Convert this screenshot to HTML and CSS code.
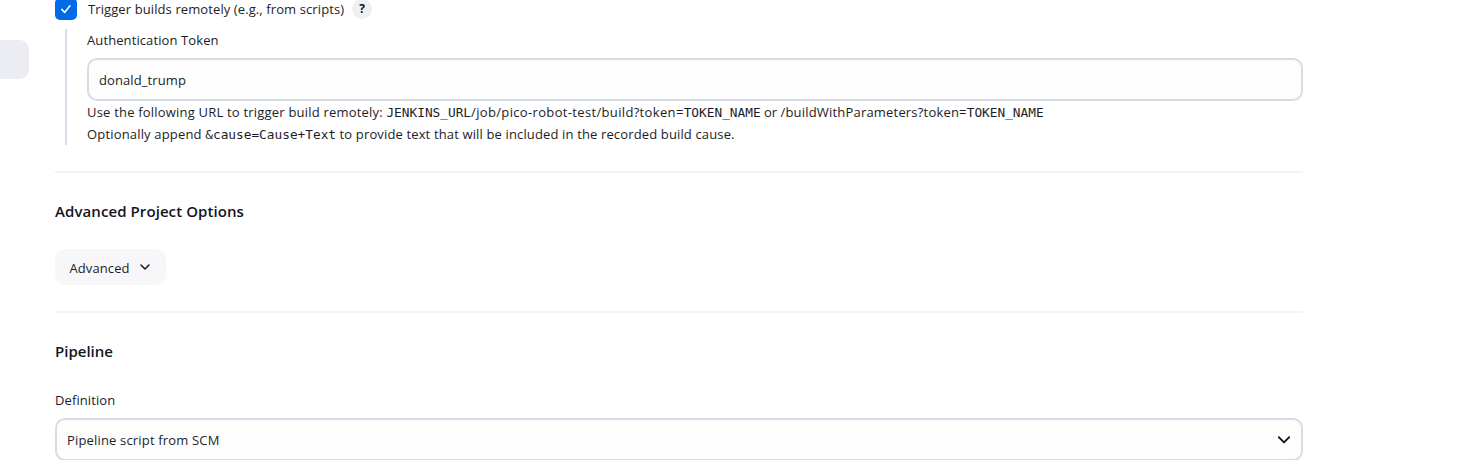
FILE: index.html
```html
<!DOCTYPE html>
<html lang="en">
<head>
<meta charset="utf-8">
<title>Configuration</title>
<link rel="stylesheet" href="styles.css">
</head>
<body>
<div class="page">
  <aside class="sidebar"><div class="sidebar-item"></div></aside>
  <main class="content">
    <div class="trigger">
      <span class="checkbox"><svg width="22" height="22" viewBox="0 0 22 22" fill="none" stroke="#fff" stroke-width="1.6" stroke-linecap="round" stroke-linejoin="round"><path d="M6.8 11.4l2.8 3 5.4-6.6"/></svg></span>
      <label class="text trigger-label">Trigger builds remotely (e.g., from scripts)</label>
      <span class="help">?</span>
    </div>
    <section class="nested">
      <div class="text label token-label">Authentication Token</div>
      <div class="field"><span class="text token-value">donald_trump</span></div>
      <p class="text hint"><span class="hint-use">Use the following URL to trigger build remotely: </span><code>JENKINS_URL</code><span class="hint-job">/job/pico-robot-test/build?token=</span><code>TOKEN_NAME</code><span class="hint-or"> or </span><span class="hint-params">/buildWithParameters?token=</span><code>TOKEN_NAME</code></p>
      <p class="text hint"><span class="hint-append">Optionally append </span><code>&amp;cause=Cause+Text</code><span class="hint-provide"> to provide text that will be included in the recorded build cause.</span></p>
    </section>
    <hr class="divider">
    <h2 class="heading heading-advanced">Advanced Project Options</h2>
    <button class="button"><span class="text advanced-text">Advanced</span><svg width="12" height="12" viewBox="0 0 12 12" fill="none" stroke="#14141f" stroke-width="1.5" stroke-linecap="round" stroke-linejoin="round"><path d="M2 4l4 4 4-4"/></svg></button>
    <hr class="divider">
    <h2 class="heading heading-pipeline">Pipeline</h2>
    <div class="text label definition-label">Definition</div>
    <div class="field select"><span class="text select-value">Pipeline script from SCM</span><svg width="14" height="14" viewBox="0 0 14 14" fill="none" stroke="#14141f" stroke-width="1.9" stroke-linecap="round" stroke-linejoin="round"><path d="M1.8 4.2l5.2 5.2 5.2-5.2"/></svg></div>
  </main>
</div>
</body>
</html>
```
FILE: styles.css
```css
* { box-sizing: border-box; }
body { margin: 0; background: #fff; color: #14141f; font-family: "Open Sans", "Noto Sans", sans-serif; font-size: 13px; overflow: hidden; }
.page { display: flex; height: 460px; overflow: hidden; }
.sidebar { width: 29px; padding-top: 40px; }
.sidebar-item { height: 39px; background: #ecedf3; border-radius: 0 9px 9px 0; }
.content { width: 1248px; margin-left: 26px; }
.text { line-height: 22px; white-space: pre; color: #1d1d28; letter-spacing: 0.1px; }
.trigger { display: flex; align-items: flex-start; height: 20px; }
.checkbox { width: 22px; height: 22px; margin-top: -2px; border-radius: 5px; background: #006be6; }
.checkbox svg { display: block; }
.trigger-label { margin: -2px 0 0 11px; width: 256px; }
.help { width: 20px; height: 20px; margin: -1px 0 0 8px; border-radius: 50%; background: #edf0f3; font-size: 12px; font-weight: 700; line-height: 20px; text-align: center; }
.nested { width: 1238px; height: 116px; margin: 9px 0 0 10px; padding-left: 20px; border-left: 2px solid #d7dce8; }
.label { height: 29px; }
.field { display: flex; align-items: center; height: 43px; padding: 0 10px; border: 2px solid #d5dbe7; border-radius: 10px; background: #fdfdfd; }
.nested .field { width: 1216px; }
.hint { margin: 0; height: 22px; }
.hint code { font: 12.79px/22px "DejaVu Sans Mono", monospace; letter-spacing: 0; }
.hint-use { letter-spacing: 0.2px; }
.hint-job { letter-spacing: 0.34px; }
.hint-or { letter-spacing: 0; }
.hint-params { letter-spacing: 0.19px; }
.hint-append { letter-spacing: 0.17px; }
.hint-provide { letter-spacing: 0.14px; }
.divider { height: 2px; margin: 26px 0 0; border: 0; background: #f3f3f7; }
.heading { margin: 26px 0 0; height: 24px; font-size: 15px; font-weight: 600; line-height: 24px; white-space: pre; }
.heading-advanced { letter-spacing: 0.08px; }
.button { display: flex; align-items: center; width: 111px; height: 36px; margin-top: 26px; padding: 2px 15px 0 14.5px; border: 0; border-radius: 10px; background: #f7f7f9; font: inherit; justify-content: space-between; }
.button svg { margin-top: -3px; }
.definition-label { margin-top: 26px; }
.select { justify-content: space-between; }
.select-value { letter-spacing: 0.17px; }
```
